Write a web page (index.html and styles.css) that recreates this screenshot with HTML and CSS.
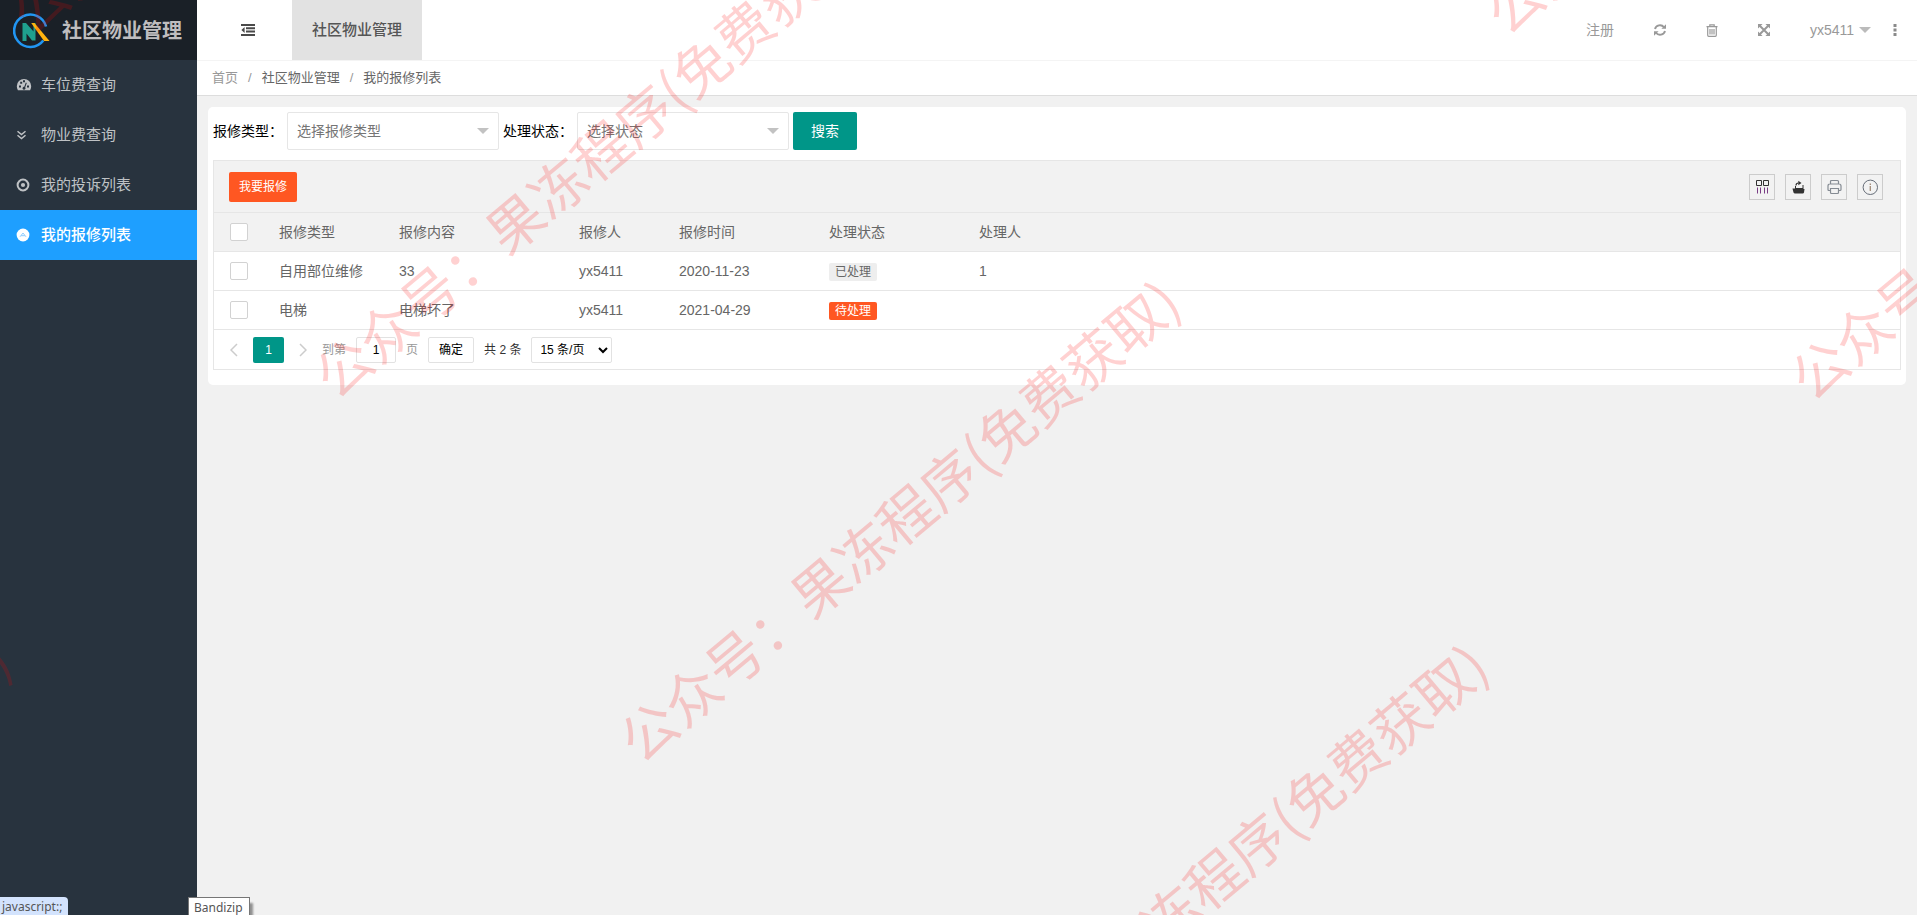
FILE: index.html
```html
<!DOCTYPE html>
<html lang="zh-CN">
<head>
<meta charset="utf-8">
<title>社区物业管理</title>
<link rel="stylesheet" href="styles.css">
</head>
<body>
<div class="app">
  <aside class="sidebar">
    <div class="brand">
      <svg class="brand-mark" viewBox="0 0 37 36" aria-hidden="true">
        <path d="M30.300 27.500A16.200 16.200 0 1 1 33 13.500" fill="none" stroke="#2196f3" stroke-width="2.600"/>
        <path d="M9.500 28V10h3.500l7.500 8.500V10H22.500v17.500h-3.500l-5.500-7V28z" fill="#1fa08e"/>
        <path d="M18.200 10H21.500L36.500 28H31Z" fill="#ffb40f"/>
      </svg>
      <h1 class="brand-name">社区物业管理</h1>
    </div>
    <nav class="menu">
      <a class="menu-item" href="#">
        <svg class="menu-icon" viewBox="0 0 16 16" aria-hidden="true"><path fill="currentColor" fill-rule="evenodd" d="M8 2a7.200 7.200 0 0 0-7.200 7.200c0 1.500.4 2.800 1.100 4h12.200c.7-1.200 1.100-2.500 1.100-4A7.200 7.200 0 0 0 8 2zM3 8.400h2v2H3zM4.200 4.800h2v2h-2zM7 3.300h2v2H7zM11 8.400h2v2h-2zM9.800 5.600l1 .4-1.600 4.200c.8 1.200 0 2.500-1.200 2.500s-2-1.500-1-2.500c.4-.4.900-.5 1.300-.5z"/></svg>
        <span>车位费查询</span>
      </a>
      <a class="menu-item" href="#">
        <svg class="menu-icon" viewBox="0 0 16 16" aria-hidden="true"><path fill="none" stroke="currentColor" stroke-width="1.500" d="M1.500 4.200l4 3.400 4-3.400M1.500 8.200l4 3.400 4-3.400"/></svg>
        <span>物业费查询</span>
      </a>
      <a class="menu-item" href="#">
        <svg class="menu-icon" viewBox="0 0 16 16" aria-hidden="true"><circle cx="7" cy="8" r="5.400" fill="none" stroke="currentColor" stroke-width="2"/><circle cx="7" cy="8" r="2.100" fill="currentColor"/></svg>
        <span>我的投诉列表</span>
      </a>
      <a class="menu-item active" href="#">
        <svg class="menu-icon" viewBox="0 0 16 16" aria-hidden="true"><circle cx="7" cy="8" r="6.400" fill="currentColor"/><path d="M4 9.800L7 6l3 3.800M5.100 8.700h3.800" fill="none" stroke="#8fcdff" stroke-width="1"/></svg>
        <span>我的报修列表</span>
      </a>
    </nav>
  </aside>

  <div class="main">
    <header class="topbar">
      <button class="fold" type="button" aria-label="折叠菜单">
        <svg viewBox="0 0 14 12" width="14" height="12" aria-hidden="true"><path fill="#4a4a4a" d="M0 0h14v2H0zM5 3.300h9v2H5zM5 6.600h9v2H5zM0 10h14v2H0zM3.600 3v6L.4 6z"/></svg>
      </button>
      <a class="tab" href="#">社区物业管理</a>
      <div class="tools">
        <a class="tool" href="#">注册</a>
        <button class="tool" type="button" aria-label="刷新">
          <svg viewBox="0 0 12 12" width="12" height="12" aria-hidden="true"><path fill="none" stroke="currentColor" stroke-width="1.900" d="M1 5A5 4.600 0 0 1 10 3.300M11 7A5 4.600 0 0 1 2 8.700"/><path fill="currentColor" d="M12 .2v4.600H7.400zM0 11.800V7.200h4.600z"/></svg>
        </button>
        <button class="tool" type="button" aria-label="删除">
          <svg viewBox="0 0 12 13" width="12" height="13" aria-hidden="true"><path fill="none" stroke="currentColor" stroke-width="1.200" d="M.5 2.700h11M3.800 2.500V.8h4.400v1.700M1.700 3v8.300q0 1 1 1h6.600q1 0 1-1V3M4 5v5.400M6 5v5.400M8 5v5.400"/></svg>
        </button>
        <button class="tool" type="button" aria-label="全屏">
          <svg viewBox="0 0 12 12" width="12" height="12" aria-hidden="true"><path stroke="currentColor" stroke-width="2" d="M1.500 1.500l9 9M10.500 1.500l-9 9"/><path fill="currentColor" d="M0 0h4.600L0 4.600zM12 0v4.600L7.400 0zM0 12V7.400L4.600 12zM12 12H7.400L12 7.400z"/></svg>
        </button>
        <button class="tool user" type="button">yx5411<span class="caret"></span></button>
        <button class="more" type="button" aria-label="更多">
          <svg viewBox="0 0 4 12" width="4" height="12" aria-hidden="true"><path fill="#8a8a8a" d="M.5 0h3v3h-3zM.5 4.500h3v3h-3zM.5 9h3v3h-3z"/></svg>
        </button>
      </div>
    </header>

    <nav class="crumbs" aria-label="路径">
      <a class="crumb-home" href="#">首页</a><span class="slash">/</span><a href="#">社区物业管理</a><span class="slash">/</span><span>我的报修列表</span>
    </nav>

    <main class="card">
      <form class="search">
        <label for="type">报修类型：</label>
        <span class="select"><select id="type"><option>选择报修类型</option></select></span>
        <label for="status">处理状态：</label>
        <span class="select"><select id="status"><option>选择状态</option></select></span>
        <button class="btn-search" type="button">搜索</button>
      </form>

      <section class="grid">
        <div class="toolbar">
          <button class="btn-add" type="button">我要报修</button>
          <div class="grid-tools">
            <button class="grid-tool" type="button" aria-label="筛选列"><svg viewBox="0 0 16 16" width="16" height="16" aria-hidden="true"><path fill="none" stroke="#333" d="M2.500 1.500h5v5h-5zM9.500 1.500h5v5h-5z"/><path stroke="#7a3d85" d="M3.500 8.500v6M6.500 8.500v6M10.500 8.500v6M13.500 8.500v6"/></svg></button>
            <button class="grid-tool" type="button" aria-label="导出"><svg viewBox="0 0 16 16" width="16" height="16" aria-hidden="true"><path fill="#333" d="M2.500 9.500H5V7h1v2h6.500V6h1v4h1L14 13.500q-.3 1-1.300 1H5q-1 0-1.500-1z"/><path fill="none" stroke="#333" stroke-width="1.200" d="M6 6.500Q6 4 8.500 4"/><path fill="#333" d="M8.300 1.700L11.500 4 8.300 6.300z"/></svg></button>
            <button class="grid-tool" type="button" aria-label="打印"><svg viewBox="0 0 16 16" width="16" height="16" aria-hidden="true"><path fill="none" stroke="#858b93" stroke-width="1.200" d="M4.500 5V2.500q0-1 1-1h6q1 0 1 1V5M4.500 11.500H3q-1 0-1-1V7q0-2 2-2h9q2 0 2 2v3.500q0 1-1 1h-1.500M4.500 9.500h8v4q0 1-1 1h-6q-1 0-1-1z"/></svg></button>
            <button class="grid-tool" type="button" aria-label="提示"><svg viewBox="0 0 16 16" width="16" height="16" aria-hidden="true"><circle cx="8.300" cy="8.300" r="7.200" fill="none" stroke="#666d78"/><path stroke="#a08a78" stroke-width="1.300" d="M8.300 4.500V6M8.300 7v5"/></svg></button>
          </div>
        </div>
        <table class="table">
          <colgroup><col class="c-check"><col class="c-type"><col class="c-content"><col class="c-user"><col class="c-time"><col class="c-status"><col></colgroup>
          <thead>
            <tr><th><input type="checkbox" aria-label="全选"></th><th>报修类型</th><th>报修内容</th><th>报修人</th><th>报修时间</th><th>处理状态</th><th>处理人</th></tr>
          </thead>
          <tbody>
            <tr><td><input type="checkbox" aria-label="选择第1行"></td><td>自用部位维修</td><td>33</td><td>yx5411</td><td>2020-11-23</td><td><span class="badge done">已处理</span></td><td>1</td></tr>
            <tr><td><input type="checkbox" aria-label="选择第2行"></td><td>电梯</td><td>电梯坏了</td><td>yx5411</td><td>2021-04-29</td><td><span class="badge wait">待处理</span></td><td></td></tr>
          </tbody>
        </table>
        <div class="pager">
          <button class="page-arrow" type="button" aria-label="上一页"><svg viewBox="0 0 8 14" width="8" height="14" aria-hidden="true"><path fill="none" stroke="#ccc" stroke-width="1.500" d="M7 1L1 7l6 6"/></svg></button>
          <button class="page-now" type="button">1</button>
          <button class="page-arrow" type="button" aria-label="下一页"><svg viewBox="0 0 8 14" width="8" height="14" aria-hidden="true"><path fill="none" stroke="#ccc" stroke-width="1.500" d="M1 1l6 6-6 6"/></svg></button>
          <label class="skip">到第<input type="text" value="1">页</label>
          <button class="page-ok" type="button">确定</button>
          <span class="total">共 2 条</span>
          <select class="limit" aria-label="每页条数"><option>15 条/页</option></select>
        </div>
      </section>
    </main>
  </div>

  <div class="marks" aria-hidden="true">
    <span class="mark m1">公众号：果冻程序(免费获取)</span>
    <span class="mark m2">公众号：果冻程序(免费获取)</span>
    <span class="mark m3">公众号：果冻程序(免费获取)</span>
    <span class="mark m4">公众号：果冻程序(免费获取)</span>
    <span class="mark m5">公众号：果冻程序(免费获取)</span>
    <span class="mark m6">公众号：果冻程序(免费获取)</span>
    <span class="mark m7">公众号：果冻程序(免费获取)</span>
  </div>
  <div class="link-status">javascript:;</div>
  <div class="tooltip">Bandizip</div>
</div>
</body>
</html>
```

FILE: styles.css
```css
* { box-sizing: border-box; }

body {
  margin: 0;
  background: #f1f1f1;
  color: #666;
  font: 14px/20px "Liberation Sans", "Noto Sans CJK SC", sans-serif;
}

a { color: inherit; text-decoration: none; }
button, input, select { margin: 0; font: inherit; }
button { padding: 0; border: 0; background: none; color: inherit; cursor: pointer; }
svg { display: block; flex: none; }

.app {
  position: relative;
  display: flex;
  min-height: 100vh;
  overflow: hidden;
}

/* Sidebar */
.sidebar { flex: none; width: 197px; background: #28333e; color: #bfc2c5; }

.brand {
  display: flex;
  align-items: center;
  gap: 12px;
  height: 60px;
  padding: 2px 0 0 13px;
  background: #1a2027;
}
.brand-mark { width: 37px; height: 36px; }
.brand-name { margin: 0; font-size: 20px; line-height: 30px; font-weight: 700; color: #bfbdbf; }

.menu-item {
  display: flex;
  align-items: center;
  gap: 9px;
  height: 50px;
  padding-left: 16px;
  font-size: 15px;
}
.menu-icon { width: 16px; height: 16px; }
.menu-item.active { background: #1e9fff; color: #fff; font-weight: 500; }

/* Header */
.main { flex: 1; min-width: 0; }

.topbar {
  display: flex;
  height: 61px;
  border-bottom: 1px solid #f4f4f4;
  background: #fff;
}
.fold { display: flex; align-items: center; justify-content: center; width: 95px; padding-left: 6px; }
.tab {
  display: flex;
  align-items: center;
  padding: 0 20px;
  background: #e2e2e2;
  color: #555;
  font-size: 15px;
  font-weight: 500;
}
.tools { display: flex; margin-left: auto; color: #999; }
.tool { display: flex; align-items: center; padding: 0 20px; }
.tool.user { gap: 5px; padding-right: 22px; }
.caret { border: 6px solid transparent; border-top-color: #bbb; border-bottom: 0; }
.more { display: flex; align-items: center; padding-right: 20px; }

.crumbs {
  display: flex;
  align-items: center;
  gap: 10px;
  height: 35px;
  padding-left: 15px;
  border-bottom: 1px solid #ddd;
  background: #fff;
  font-size: 13px;
}
.crumb-home, .slash { color: #999; }

/* Card and search form */
.card { margin: 11px; padding: 5px 5px 15px; border-radius: 5px; background: #fff; }

.search { display: flex; align-items: center; gap: 4px; margin-bottom: 10px; color: #000; }
.select { position: relative; width: 212px; }
.select::after {
  content: "";
  position: absolute;
  top: 16px;
  right: 10px;
  border: 6px solid transparent;
  border-top-color: #c2c2c2;
  border-bottom: 0;
  pointer-events: none;
}
.select select {
  display: block;
  width: 100%;
  height: 38px;
  padding: 0 9px;
  border: 1px solid #e6e6e6;
  border-radius: 2px;
  background: #fff;
  color: #757575;
  appearance: none;
}
.btn-search { height: 38px; padding: 0 18px; border-radius: 2px; background: #009688; color: #fff; }

/* Data grid */
.grid { border: 1px solid #e6e6e6; }

.toolbar {
  display: flex;
  align-items: center;
  justify-content: space-between;
  height: 52px;
  padding: 0 17px 0 15px;
  border-bottom: 1px solid #e6e6e6;
  background: #f2f2f2;
}
.btn-add { height: 30px; padding: 0 10px; border-radius: 2px; background: #ff5722; color: #fff; font-size: 12px; }
.grid-tools { display: flex; gap: 10px; }
.grid-tool {
  display: flex;
  align-items: center;
  justify-content: center;
  width: 26px;
  height: 26px;
  border: 1px solid #ccc;
}

.table { width: 100%; border-collapse: separate; border-spacing: 0; table-layout: fixed; }
.c-check { width: 50px; }
.c-type { width: 120px; }
.c-content { width: 180px; }
.c-user { width: 100px; }
.c-time, .c-status { width: 150px; }
.table th, .table td {
  height: 39px;
  padding: 0 15px;
  border-bottom: 1px solid #e6e6e6;
  font-weight: 400;
  text-align: left;
}
.table thead { background: #f2f2f2; }
.table input {
  display: block;
  width: 18px;
  height: 18px;
  margin-left: 1px;
  border: 1px solid #d2d2d2;
  border-radius: 2px;
  background: #fff;
  appearance: none;
}

.badge { display: inline-block; padding: 0 6px; border-radius: 2px; font-size: 12px; line-height: 18px; vertical-align: middle; }
.badge.done { background: #eee; }
.badge.wait { background: #ff5722; color: #fff; }

/* Pager */
.pager { display: flex; align-items: center; gap: 10px; height: 39px; padding-left: 11px; font-size: 12px; color: #333; }
.page-arrow { display: flex; align-items: center; justify-content: center; width: 18px; height: 26px; }
.page-now { width: 31px; height: 26px; border-radius: 2px; background: #009688; color: #fff; }
.skip { display: flex; align-items: center; gap: 10px; color: #999; }
.skip input, .page-ok, .limit { height: 26px; border: 1px solid #e2e2e2; border-radius: 2px; background: #fff; color: #000; }
.skip input { width: 40px; padding: 0; text-align: center; }
.page-ok { padding: 0 10px; }
.limit { width: 81px; padding: 0 4px; }

/* Watermarks */
.marks { position: absolute; inset: 0; overflow: hidden; pointer-events: none; }
.mark {
  position: absolute;
  color: rgba(255, 0, 0, 0.18);
  font-family: "Noto Sans CJK SC", sans-serif;
  font-size: 56px;
  line-height: 56px;
  white-space: nowrap;
  transform: rotate(-40deg);
  transform-origin: 28px 28px;
}
.m1 { left: 10px; top: -27px; }
.m2 { left: 314px; top: 337px; }
.m3 { left: 619px; top: 701px; }
.m4 { left: 927px; top: 1065px; }
.m5 { left: 1485px; top: -27px; }
.m6 { left: 1790px; top: 339px; }
.m7 { left: -550px; top: 1060px; }

/* Floating hints along the bottom edge */
.link-status, .tooltip {
  position: absolute;
  bottom: 0;
  height: 18px;
  color: #555;
  font: 12px/20px "Noto Sans", sans-serif;
}
.link-status { left: 0; padding: 0 6px 0 2px; border-radius: 0 4px 0 0; background: #d3e3fd; }
.tooltip { left: 188px; padding: 0 6px 0 5px; border: 1px solid #767676; border-bottom: 0; background: #fff; box-shadow: 3px 6px 2px rgba(0, 0, 0, 0.4); }
```
